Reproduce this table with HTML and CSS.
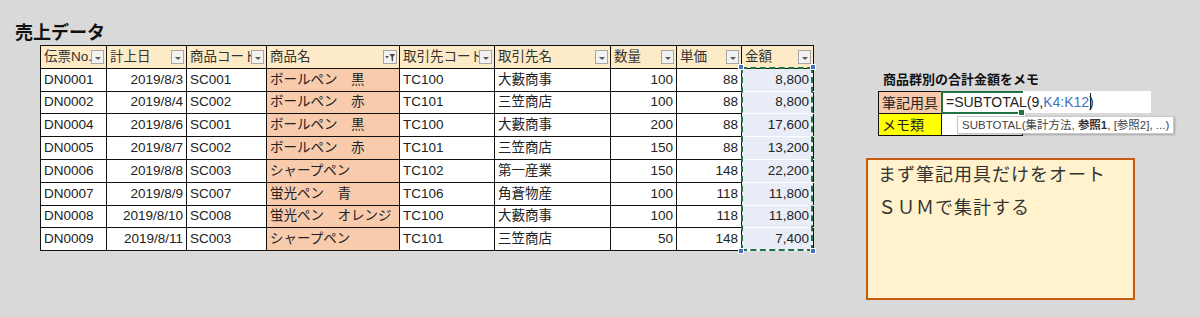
FILE: index.html
```html
<!DOCTYPE html>
<html lang="ja">
<head>
<meta charset="utf-8">
<link rel="stylesheet" href="styles.css">
</head>
<body>
<div class="page">
  <section class="left">
    <h1 class="title">売上データ</h1>
    <div class="table-wrap">
      <table class="sheet">
        <colgroup>
          <col class="c1"><col class="c2"><col class="c3"><col class="c4"><col class="c5"><col class="c6"><col class="c7"><col class="c8"><col class="c9">
        </colgroup>
        <thead>
          <tr>
            <th><span class="ht">伝票No.</span><span class="dd"></span></th>
            <th><span class="ht">計上日</span><span class="dd"></span></th>
            <th><span class="ht">商品コード</span><span class="dd"></span></th>
            <th><span class="ht">商品名</span><span class="dd filt"><svg width="12" height="12" viewBox="0 0 12 12"><path d="M1 5h4L3 7.5z" fill="#555"/><path d="M5.5 3h5.5L9 6v4.5L7.6 9.5V6z" fill="#444"/></svg></span></th>
            <th><span class="ht">取引先コード</span><span class="dd"></span></th>
            <th><span class="ht">取引先名</span><span class="dd"></span></th>
            <th><span class="ht">数量</span><span class="dd"></span></th>
            <th><span class="ht">単価</span><span class="dd"></span></th>
            <th><span class="ht">金額</span><span class="dd"></span></th>
          </tr>
        </thead>
        <tbody>
          <tr><td>DN0001</td><td class="r">2019/8/3</td><td>SC001</td><td class="pn">ボールペン　黒</td><td>TC100</td><td>大藪商事</td><td class="r">100</td><td class="r">88</td><td class="r amt">8,800</td></tr>
          <tr><td>DN0002</td><td class="r">2019/8/4</td><td>SC002</td><td class="pn">ボールペン　赤</td><td>TC101</td><td>三笠商店</td><td class="r">100</td><td class="r">88</td><td class="r amt">8,800</td></tr>
          <tr><td>DN0004</td><td class="r">2019/8/6</td><td>SC001</td><td class="pn">ボールペン　黒</td><td>TC100</td><td>大藪商事</td><td class="r">200</td><td class="r">88</td><td class="r amt">17,600</td></tr>
          <tr><td>DN0005</td><td class="r">2019/8/7</td><td>SC002</td><td class="pn">ボールペン　赤</td><td>TC101</td><td>三笠商店</td><td class="r">150</td><td class="r">88</td><td class="r amt">13,200</td></tr>
          <tr><td>DN0006</td><td class="r">2019/8/8</td><td>SC003</td><td class="pn">シャープペン</td><td>TC102</td><td>第一産業</td><td class="r">150</td><td class="r">148</td><td class="r amt">22,200</td></tr>
          <tr><td>DN0007</td><td class="r">2019/8/9</td><td>SC007</td><td class="pn">蛍光ペン　青</td><td>TC106</td><td>角蒼物産</td><td class="r">100</td><td class="r">118</td><td class="r amt">11,800</td></tr>
          <tr><td>DN0008</td><td class="r">2019/8/10</td><td>SC008</td><td class="pn">蛍光ペン　オレンジ</td><td>TC100</td><td>大藪商事</td><td class="r">100</td><td class="r">118</td><td class="r amt">11,800</td></tr>
          <tr><td>DN0009</td><td class="r">2019/8/11</td><td>SC003</td><td class="pn">シャープペン</td><td>TC101</td><td>三笠商店</td><td class="r">50</td><td class="r">148</td><td class="r amt">7,400</td></tr>
        </tbody>
      </table>
      <div class="marquee">
        <span class="hdl tl"></span><span class="hdl tr"></span><span class="hdl bl"></span><span class="hdl br"></span>
      </div>
    </div>
  </section>

  <section class="right">
    <div class="memo-title">商品群別の合計金額をメモ</div>
    <div class="memo-grid">
      <div class="mcell lbl-orange">筆記用具</div>
      <div class="mcell val editing">
        <div class="editbox"><span>=SUBTOTAL(9,</span><span class="ref">K4:K12</span><span>)</span><span class="caret"></span></div>
        <span class="fill"></span>
      </div>
      <div class="mcell lbl-yellow">メモ類</div>
      <div class="mcell val">
        <div class="tip">SUBTOTAL(集計方法, <b>参照1</b>, [参照2], ...)</div>
      </div>
    </div>
    <div class="note"><p class="note-text">まず筆記用具だけをオート<br>ＳＵＭで集計する</p></div>
  </section>
</div>
</body>
</html>
```

FILE: styles.css
```css
html, body {
  margin: 0;
  padding: 0;
}
body {
  background: #d9d9d9;
  font-family: "Liberation Sans", "Noto Sans CJK JP", sans-serif;
  color: #222;
  width: 1200px;
  height: 317px;
  overflow: hidden;
}
.page {
  display: flex;
  align-items: flex-start;
}
.left {
  padding: 20px 0 0 15px;
  width: 798px;
}
.title {
  margin: 0;
  font-size: 18px;
  line-height: 22px;
  font-weight: bold;
  color: #111;
  font-family: "Noto Sans CJK JP", sans-serif;
}
.table-wrap {
  position: relative;
  margin: 3px 0 0 25px;
  width: 773px;
}
.sheet {
  border-collapse: collapse;
  table-layout: fixed;
  width: 773px;
  font-size: 13.5px;
}
.c1 { width: 66px; }
.c2 { width: 80px; }
.c3 { width: 80px; }
.c4 { width: 133px; }
.c5 { width: 95px; }
.c6 { width: 116px; }
.c7 { width: 66px; }
.c8 { width: 65px; }
.c9 { width: 72px; }
.sheet th, .sheet td {
  border: 1px solid #111;
  height: 21.8px;
  padding: 0 2px 0 3px;
  white-space: nowrap;
  overflow: hidden;
  background: #fff;
  font-weight: normal;
  text-align: left;
  line-height: 20px;
}
.sheet th {
  background: #fdebc8;
  position: relative;
  color: #333;
}
.sheet td.r { text-align: right; padding-right: 3px; }
.sheet td.pn { background: #f8cbad; }
.sheet td.amt {
  background: #e8edf7;
  border-bottom-color: #fff;
  padding-right: 4px;
}
.ht {
  display: block;
  overflow: hidden;
}
.dd {
  position: absolute;
  right: 2px;
  top: 4px;
  width: 13px;
  height: 14px;
  box-sizing: border-box;
  border: 1px solid #a6a6a6;
  background: #f2f2f2;
  display: flex;
  align-items: center;
  justify-content: center;
}
.dd::after {
  content: "";
  display: block;
  margin-top: 2px;
  border-left: 3px solid transparent;
  border-right: 3px solid transparent;
  border-top: 3px solid #595959;
}
.dd.filt { width: 14px; }
.dd.filt::after { display: none; }
.marquee {
  position: absolute;
  left: 701px;
  top: 22px;
  width: 72px;
  height: 184px;
  box-sizing: border-box;
  border: 2px dashed #217346;
  pointer-events: none;
}
.hdl {
  position: absolute;
  width: 6px;
  height: 6px;
  background: #4472c4;
  border: 1px solid #fff;
  box-sizing: border-box;
}
.hdl.tl { left: -5px; top: -5px; }
.hdl.tr { right: -5px; top: -5px; }
.hdl.bl { left: -5px; bottom: -5px; }
.hdl.br { right: -5px; bottom: -5px; }

.right {
  margin-left: 53px;
  padding-top: 70px;
  width: 300px;
}
.memo-title {
  font-family: "Noto Sans CJK JP", sans-serif;
  font-weight: bold;
  font-size: 13px;
  line-height: 18px;
  color: #111;
  margin-left: 17px;
}
.memo-grid {
  display: grid;
  grid-template-columns: 63px 81px;
  grid-auto-rows: 22px;
  margin: 3px 0 0 12px;
  border-top: 1px solid #111;
  border-left: 1px solid #111;
  width: 144px;
  font-size: 14px;
}
.mcell {
  border-right: 1px solid #111;
  border-bottom: 1px solid #111;
  padding-left: 3px;
  line-height: 21px;
  font-family: "Noto Sans CJK JP", sans-serif;
  position: relative;
  background: #fff;
}
.lbl-orange { background: #f8cbad; }
.lbl-yellow { background: #ffff00; }
.editing {
  z-index: 2;
}
.editbox {
  position: absolute;
  left: -1px;
  top: -1px;
  width: 210px;
  height: 22px;
  background: #fff;
  font-family: "Liberation Sans", sans-serif;
  font-size: 14px;
  line-height: 22px;
  padding-left: 5px;
  box-sizing: border-box;
  color: #222;
  white-space: nowrap;
}
.editbox::before {
  content: "";
  position: absolute;
  left: 0;
  top: 0;
  width: 82px;
  height: 23px;
  border: 2px solid #217346;
  border-right: 0;
  box-sizing: border-box;
}
.ref { color: #4472c4; }
.caret {
  display: inline-block;
  width: 1px;
  height: 17px;
  background: #222;
  vertical-align: -3px;
  margin-left: -4px;
}
.fill {
  position: absolute;
  right: -3px;
  bottom: -3px;
  width: 5px;
  height: 5px;
  background: #217346;
  border: 1px solid #fff;
  z-index: 3;
}
.tip {
  position: absolute;
  left: 15px;
  top: 2px;
  height: 16px;
  background: #fff;
  border: 1px solid #c8c8c8;
  box-shadow: 1px 1px 2px rgba(0,0,0,0.25);
  font-family: "Liberation Sans", "Noto Sans CJK JP", sans-serif;
  font-size: 11.5px;
  line-height: 16px;
  color: #444;
  padding: 0 4px;
  white-space: nowrap;
  z-index: 4;
}
.tip b { color: #333; }
.note {
  margin-top: 22px;
  width: 269px;
  height: 142px;
  box-sizing: border-box;
  border: 2px solid #c55a11;
  background: #fff2cc;
  padding: 0 0 0 10px;
  font-family: "Noto Sans CJK JP", sans-serif;
  font-size: 18px;
  line-height: 33px;
  color: #333;
  letter-spacing: 1px;
}
.note-text {
  margin: -3px 0 0;
}
```
